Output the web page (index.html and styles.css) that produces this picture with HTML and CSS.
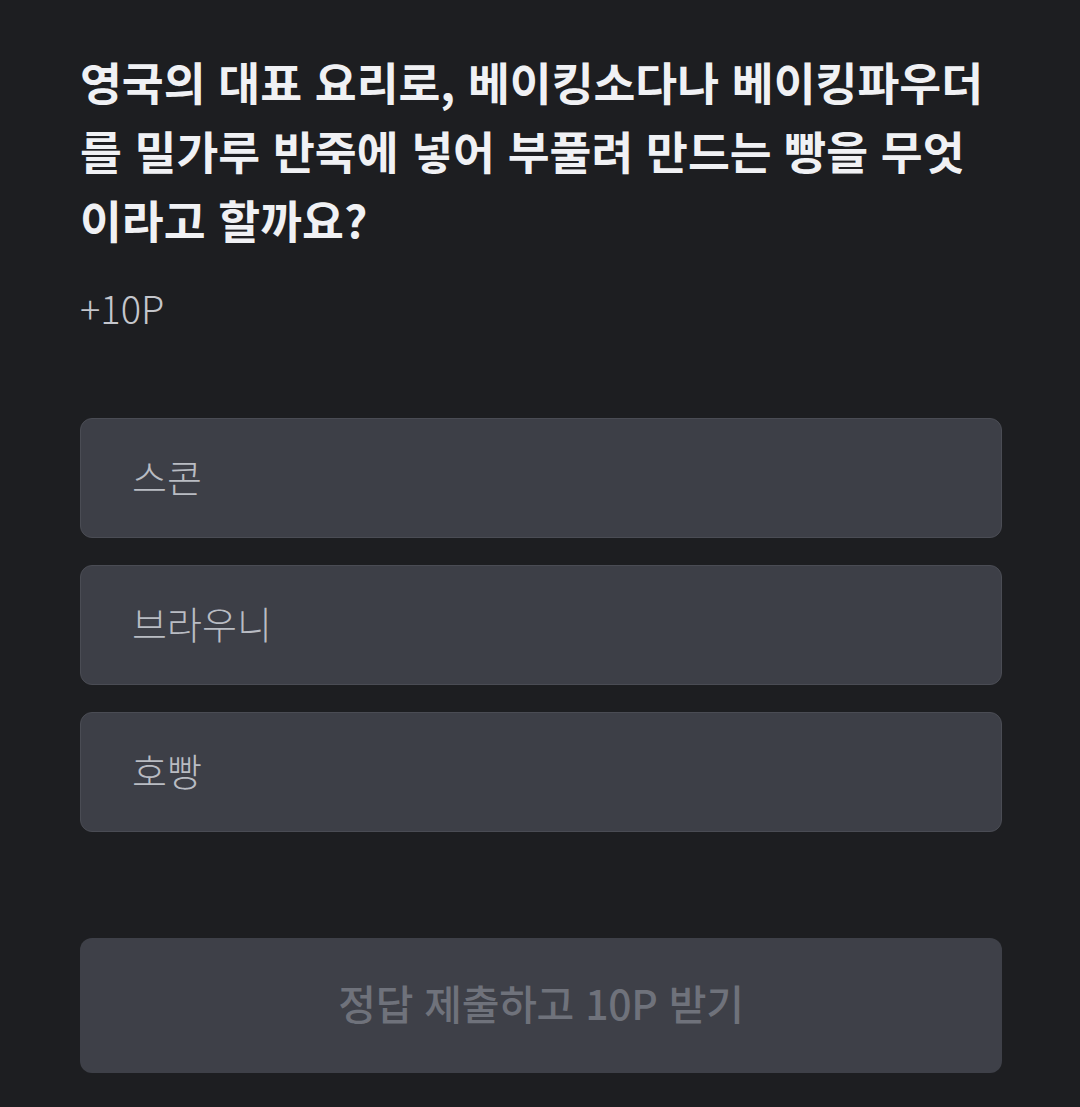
FILE: index.html
```html
<!DOCTYPE html>
<html lang="ko">
<head>
<meta charset="utf-8">
<title>퀴즈</title>
<link rel="stylesheet" href="styles.css">
</head>
<body>
<main class="quiz">
  <h1 class="question">영국의 대표 요리로, 베이킹소다나 베이킹파우더를 밀가루 반죽에 넣어 부풀려 만드는 빵을 무엇이라고 할까요?</h1>
  <p class="reward">+10P</p>
  <ul class="options">
    <li class="option">스콘</li>
    <li class="option">브라우니</li>
    <li class="option">호빵</li>
  </ul>
  <button class="submit" type="button">정답 제출하고 10P 받기</button>
</main>
</body>
</html>
```

FILE: styles.css
```css
html, body {
  margin: 0;
  padding: 0;
  background: #1d1e21;
}
body {
  font-family: "Noto Sans CJK KR", "Noto Sans", sans-serif;
}
.quiz {
  display: flex;
  flex-direction: column;
  padding: 47px 78px 0 80px;
}
.question {
  margin: 0;
  font-size: 45.5px;
  line-height: 69px;
  font-weight: 700;
  color: #f0f1f4;
}
.reward {
  margin: 28px 0 0;
  font-size: 38px;
  font-weight: 300;
  color: #c4c6cc;
  line-height: 52px;
}
.options {
  list-style: none;
  margin: 84px 0 0;
  padding: 0;
  display: flex;
  flex-direction: column;
  gap: 27px;
}
.option {
  box-sizing: border-box;
  height: 120px;
  display: flex;
  align-items: center;
  padding: 0 0 6px 51px;
  background: #3d3f47;
  border: 1.5px solid #4a4c54;
  border-radius: 12px;
  font-size: 38px;
  font-weight: 300;
  color: #b9bcc3;
}
.submit {
  margin-top: 106px;
  height: 135px;
  padding: 0 0 8px;
  border: none;
  border-radius: 12px;
  background: #3e4048;
  color: #6f727b;
  font-family: inherit;
  font-size: 41px;
  font-weight: 500;
  letter-spacing: -0.3px;
}
```
